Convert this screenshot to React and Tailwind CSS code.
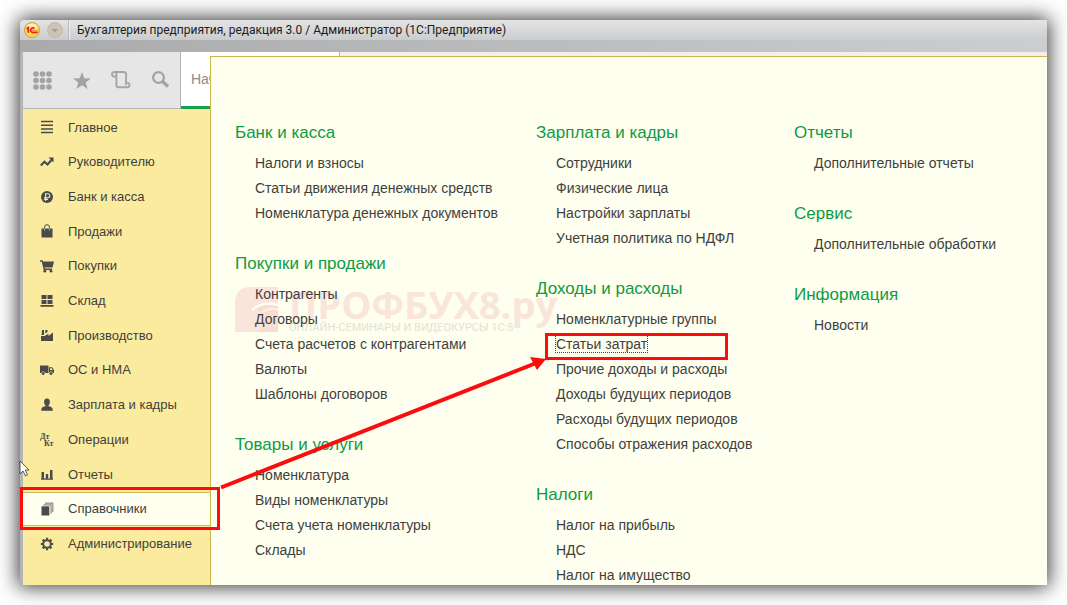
import React from "react";

const ICON = "#4a4a4a";

const icons = {
  main: <path d="M1 1.500h12M1 5.200h12M1 8.900h12M1 12.600h12" stroke={ICON} strokeWidth="1.500" fill="none" />,
  trend: (
    <>
      <path d="M.8 10.500L4.500 6.800l3 2.700 4-4.500" stroke={ICON} strokeWidth="2.200" fill="none" />
      <path d="M8.500 2.500h5v5z" fill={ICON} />
    </>
  ),
  bank: (
    <>
      <circle cx="7" cy="7" r="6" fill={ICON} />
      <path d="M5.6 11V3.8h2.2a1.9 1.9 0 010 3.9H4M4 9.4h4" stroke="#fbeb9e" strokeWidth="1.1" fill="none" />
    </>
  ),
  bag: (
    <>
      <path d="M1.500 4.500h11V13.500h-11z" fill={ICON} />
      <path d="M4.500 5V3.200a2.500 2.500 0 015 0V5" stroke={ICON} strokeWidth="1" fill="none" />
      <path d="M4.500 4.500v2.200M9.500 4.500v2.200" stroke="#c9bd84" strokeWidth="0.900" />
    </>
  ),
  cart: (
    <>
      <path d="M0 1.300h2.600L3.200 2.500H14l-1.500 6H4.500L4.800 9.600H12v1.300H3.700L1.800 2.700H0z" fill={ICON} />
      <circle cx="4.800" cy="12.200" r="1.400" fill={ICON} />
      <circle cx="11" cy="12.200" r="1.400" fill={ICON} />
    </>
  ),
  store: <path d="M1.500 1h5v4h-5zM7.500 1h5v4h-5zM1.500 6h5v4h-5zM7.500 6h5v4h-5zM0.500 11h13v1.700H0.500z" fill={ICON} />,
  factory: <path d="M1 13V8l3.500 0L8.500 5.800V8L13 4.500V13zM2 2h2v5H1.600zM5.200 2h2.300v2L5.400 5.500z" fill={ICON} />,
  truck: (
    <>
      <path d="M0 2.500h8.500v7.500H0z" fill={ICON} />
      <path d="M9 4.200h3l2 2.500v3.300H9z" fill={ICON} />
      <path d="M10 5.300h1.600l1.300 1.800H10z" fill="#fbeb9e" />
      <circle cx="3.200" cy="10.500" r="1.800" fill={ICON} stroke="#fbeb9e" strokeWidth="0.600" />
      <circle cx="11" cy="10.500" r="1.800" fill={ICON} stroke="#fbeb9e" strokeWidth="0.600" />
    </>
  ),
  person: (
    <>
      <ellipse cx="7" cy="4" rx="2.900" ry="3.500" fill={ICON} />
      <path d="M5.600 6h2.800v2.100l2.800.8q1.600.6 1.600 3.900H1.200Q1.200 9.500 2.800 8.900l2.800-.8z" fill={ICON} />
    </>
  ),
  dtkt: (
    <g fill={ICON} fontFamily="Liberation Serif, serif" fontWeight="bold" fontSize="8">
      <text x="0" y="6">Дт</text>
      <text x="4" y="13">Кт</text>
    </g>
  ),
  chart: <path d="M1 11.500h12v1.300H1zM1.500 5h2.500v7H1.500zM5.800 7h2.400v5H5.800zM10 3h2.500v9H10z" fill={ICON} />,
  books: (
    <>
      <path d="M5 1.200h7.800V10M3.300 2.900h7.800v8.800" stroke="#8a8a86" strokeWidth="1.200" fill="none" />
      <path d="M1.500 4.300h7.800v9.200H1.500z" fill={ICON} />
    </>
  ),
  gear: (
    <>
      <circle cx="7" cy="7" r="3.800" fill="none" stroke={ICON} strokeWidth="2" />
      <path
        d="M7 .8v2M7 11.200v2M.8 7h2M11.200 7h2M2.600 2.600L4 4M10 10l1.400 1.400M2.600 11.400L4 10M10 4l1.400-1.400"
        stroke={ICON}
        strokeWidth="2.200"
      />
    </>
  ),
};

const sections = [
  ["Главное", "main"],
  ["Руководителю", "trend"],
  ["Банк и касса", "bank"],
  ["Продажи", "bag"],
  ["Покупки", "cart"],
  ["Склад", "store"],
  ["Производство", "factory"],
  ["ОС и НМА", "truck"],
  ["Зарплата и кадры", "person"],
  ["Операции", "dtkt"],
  ["Отчеты", "chart"],
  ["Справочники", "books"],
  ["Администрирование", "gear"],
];

const ACTIVE_SECTION = "Справочники";
const FOCUSED_LINK = "Статьи затрат";

const columns = [
  [
    ["Банк и касса", ["Налоги и взносы", "Статьи движения денежных средств", "Номенклатура денежных документов"]],
    ["Покупки и продажи", ["Контрагенты", "Договоры", "Счета расчетов с контрагентами", "Валюты", "Шаблоны договоров"]],
    ["Товары и услуги", ["Номенклатура", "Виды номенклатуры", "Счета учета номенклатуры", "Склады"]],
  ],
  [
    ["Зарплата и кадры", ["Сотрудники", "Физические лица", "Настройки зарплаты", "Учетная политика по НДФЛ"]],
    [
      "Доходы и расходы",
      [
        "Номенклатурные группы",
        "Статьи затрат",
        "Прочие доходы и расходы",
        "Доходы будущих периодов",
        "Расходы будущих периодов",
        "Способы отражения расходов",
      ],
    ],
    ["Налоги", ["Налог на прибыль", "НДС", "Налог на имущество"]],
  ],
  [
    ["Отчеты", ["Дополнительные отчеты"]],
    ["Сервис", ["Дополнительные обработки"]],
    ["Информация", ["Новости"]],
  ],
];

function TitleBar() {
  return (
    <header className="flex h-8 shrink-0 flex-col">
      <div className="flex h-5 items-center bg-linear-to-b from-[#e4e4e4] to-[#cbccce] pl-1">
        <svg className="size-4 shrink-0" viewBox="0 0 16 16" aria-hidden="true">
          <circle cx="8" cy="8" r="7.500" fill="#fbd94c" stroke="#d08a3a" strokeWidth="0.800" />
          <ellipse cx="8" cy="5" rx="5.500" ry="3.500" fill="#fff3b0" />
          <path d="M2.600 6.800L4.300 5.600v5.200" fill="none" stroke="#e2211c" strokeWidth="1.700" />
          <path d="M10.800 6.600A2.400 2.400 0 108.500 10.400h5.200" fill="none" stroke="#e2211c" strokeWidth="1.500" />
          <path d="M9.500 7.800A1 1 0 108.600 8.900h5" fill="none" stroke="#e2211c" strokeWidth="0.600" />
        </svg>
        <button type="button" aria-label="Меню окна" className="ml-[7px] size-4 shrink-0">
          <svg className="size-4" viewBox="0 0 16 16">
            <circle cx="8" cy="8" r="7.500" fill="#cdc4b6" stroke="#bdb3a4" strokeWidth="0.800" />
            <path d="M4.500 7h7L8 10.500z" fill="#aaa08f" />
          </svg>
        </button>
        <span className="ml-[5px] h-5 w-0.5 border-x border-l-[#b8b8b8] border-r-[#ececec]" />
        <h1 className="ml-[7px] font-[Roboto,sans-serif] text-[12px] leading-5 whitespace-nowrap text-[#1c1c1c]">
          Бухгалтерия предприятия, редакция 3.0 / Администратор (1С:Предприятие)
        </h1>
      </div>
      <div className="h-3 bg-linear-to-r from-[#a9aaac] to-[#cdcecf]" />
    </header>
  );
}

function ToolButton({ label, children }) {
  return (
    <button type="button" aria-label={label} className="size-5">
      <svg className="size-5" viewBox="0 0 20 20" fill="none">
        {children}
      </svg>
    </button>
  );
}

function Toolbar() {
  return (
    <div className="flex h-[57px] w-[158px] shrink-0 items-center justify-between border-r border-b border-[#b4b5b9] bg-[#e6e6e6] px-[9px]">
      <ToolButton label="Разделы">
        {[4, 10.5, 17].map((cy) => [4, 10.5, 17].map((cx) => <circle key={`${cx}-${cy}`} cx={cx} cy={cy} r="2.800" fill="#a3a3a3" />))}
      </ToolButton>
      <ToolButton label="Избранное">
        <path d="M10 2l2.300 6.200 6.700.2-5.300 4L15.600 19 10 15.200 4.400 19l1.900-6.600L1 8.400l6.700-.2z" fill="#a3a3a3" />
      </ToolButton>
      <ToolButton label="История">
        <path
          d="M5 6.500H3.200a2.200 2.200 0 112.200-2.300V15a2.300 2.300 0 002.300 2.300h8.600a2.200 2.200 0 000-4.400h-1.200V4.500A2.500 2.500 0 0012.600 2H3.200M14.800 13v2.200"
          stroke="#a6a6a6"
          strokeWidth="1.900"
        />
      </ToolButton>
      <ToolButton label="Поиск">
        <circle cx="7.500" cy="7.500" r="5.400" stroke="#a3a3a3" strokeWidth="2.200" />
        <path d="M11.500 11.500l5.500 5" stroke="#a3a3a3" strokeWidth="3.600" />
      </ToolButton>
    </div>
  );
}

function SectionNav() {
  return (
    <nav className="grid min-h-0 flex-1 auto-rows-fr bg-[#fbeb9e] pt-px pb-6">
      {sections.map(([name, icon]) => (
        <a
          key={name}
          href="#"
          className={`flex min-h-0 items-center gap-3.5 pl-[17px] text-[13px] whitespace-nowrap text-[#3f3f3f] ${
            name === ACTIVE_SECTION ? "border-y border-[#cdbb5c] bg-[#feffee]" : ""
          }`}
        >
          <svg className="size-3.5 shrink-0" viewBox="0 0 14 14" aria-hidden="true">
            {icons[icon]}
          </svg>
          {name}
        </a>
      ))}
    </nav>
  );
}

function Group({ title, items }) {
  return (
    <section>
      <h2 className="text-[17px] leading-7 text-[#0f9a45]">{title}</h2>
      <ul className="mt-1 pl-5">
        {items.map((item) => (
          <li key={item} className="text-[14px] leading-[25px] text-[#3f3f3f]">
            <a
              href="#"
              className={item === FOCUSED_LINK ? "outline-1 outline-dotted outline-[#444]" : ""}
            >
              {item}
            </a>
          </li>
        ))}
      </ul>
    </section>
  );
}

function Watermark() {
  return (
    <div className="pointer-events-none absolute top-[229px] left-6 flex gap-2" aria-hidden="true">
      <svg className="h-[46px] w-[46px]" viewBox="0 0 46 46">
        <path d="M0 46V17Q0 1 16 1h27v45z" fill="#fae5dc" />
        <path d="M18 46Q31 44 29 32 28 24 20 23 30 15 43 20v26z" fill="#f8ddd3" />
        <path d="M17 24Q28 15 43 19" stroke="#feffee" strokeWidth="2.500" fill="none" />
        <path d="M27 26q9-5 16-2" stroke="#fdf3ea" strokeWidth="1.500" fill="none" />
      </svg>
      <div className="flex flex-col whitespace-nowrap">
        <span className="font-['Open_Sans',sans-serif] text-[38px] leading-9 font-bold text-[#fae5dc]">ПРОФБУХ8.ру</span>
        <span className="font-[Roboto,sans-serif] text-[11px] leading-3 text-[#e2e2d5]">ОНЛАЙН-СЕМИНАРЫ И ВИДЕОКУРСЫ 1С:8</span>
      </div>
    </div>
  );
}

function SectionPanel() {
  return (
    <main className="relative min-h-0 flex-1 overflow-hidden border-t border-l border-[#cdb64c] bg-[#feffee] pt-[62px] pl-6">
      <Watermark />
      <div className="relative grid grid-cols-[301px_258px_1fr]">
        {columns.map((groups) => (
          <div key={groups[0][0]} className="flex flex-col gap-6">
            {groups.map(([title, items]) => (
              <Group key={title} title={title} items={items} />
            ))}
          </div>
        ))}
      </div>
    </main>
  );
}

function Annotations() {
  return (
    <svg className="pointer-events-none absolute top-0 left-0 h-[605px] w-[1067px]" viewBox="0 0 1067 605" fill="none" aria-hidden="true">
      <path d="M20 461v13l3-3 2.500 5 2-1-2.200-5H29z" fill="#fff" stroke="#333" strokeWidth="0.800" />
      <g stroke="#fb0d0d" strokeWidth="3">
        <path d="M21.500 488.500h197v40h-197z" />
        <path d="M546.500 334.500h180v24h-180z" />
        <path d="M221 487.500L535 363.500" strokeWidth="4" />
      </g>
      <path d="M546 359l-16-2 7 13z" fill="#fb0d0d" />
    </svg>
  );
}

export default function App() {
  return (
    <div className="relative flex h-screen overflow-hidden bg-white p-5 font-['Liberation_Sans',Arial,sans-serif]">
      <div className="flex min-w-0 flex-1 flex-col overflow-hidden rounded-tl bg-[#b4b5b8] shadow-[0_0_20px_2px_#000000c8]">
        <TitleBar />
        <div className="flex min-h-0 flex-1 pl-[3px]">
          <div className="flex w-[187px] shrink-0 flex-col">
            <div className="flex">
              <Toolbar />
              <div className="flex min-w-0 flex-1 items-center overflow-hidden border-b-3 border-[#12a04a] bg-white pl-2.5 text-[14px] whitespace-nowrap text-[#8c8c8c]">
                Начальная страница
              </div>
            </div>
            <SectionNav />
          </div>
          <div className="flex min-w-0 flex-1 flex-col">
            <div className="flex h-1 shrink-0 bg-[#f0f0f0]">
              <div className="w-[130px] border-r border-[#b4b5b9] bg-white" />
            </div>
            <SectionPanel />
          </div>
        </div>
      </div>
      <Annotations />
    </div>
  );
}
